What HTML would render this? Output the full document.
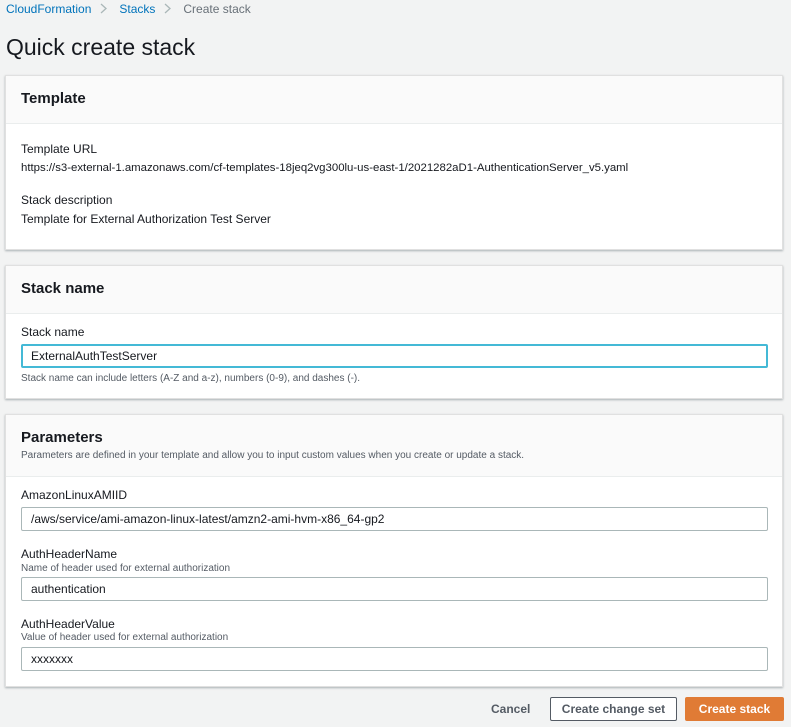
<!DOCTYPE html>
<html><head><style>
body{margin:0;width:791px;height:727px;background:#f2f3f3;font-family:"Liberation Sans",sans-serif;color:#16191f;position:relative;overflow:hidden}
.a{position:absolute;white-space:nowrap}
.p{position:absolute;left:5px;width:778px;background:#fff;box-shadow:0 1px 2px rgba(0,28,36,.3);border:1px solid #e0e0e0;box-sizing:border-box}
.h{position:absolute;left:0;right:0;top:0;background:#fafafa;border-bottom:1px solid #eaeded}
.in{position:absolute;left:21px;width:747px;height:24px;border:1px solid #aab7b8;border-radius:2px;box-sizing:border-box;background:#fff;font-size:12px;padding:4px 9px}
.s{font-size:10px;color:#545b64}
.ht{font-size:15px;font-weight:bold}
</style></head><body>
<div class="a" style="left:6px;top:2px;font-size:12px"><span style="color:#0073bb">CloudFormation</span><svg width="28" height="12" style="vertical-align:-1px"><path d="M10 2l5 4.5-5 4.5" fill="none" stroke="#aab7b8" stroke-width="1.3"/></svg><span style="color:#0073bb">Stacks</span><svg width="28" height="12" style="vertical-align:-1px"><path d="M10 2l5 4.5-5 4.5" fill="none" stroke="#aab7b8" stroke-width="1.3"/></svg><span style="color:#687078">Create stack</span></div>
<div class="a" style="left:6px;top:34px;font-size:23px">Quick create stack</div>

<div class="p" style="top:75px;height:175px"><div class="h" style="height:47px"></div></div>
<div class="a ht" style="left:21px;top:90px">Template</div>
<div class="a" style="left:21px;top:142px;font-size:12px">Template URL</div>
<div class="a" style="left:21px;top:162px;font-size:11.4px">https://s3-external-1.amazonaws.com/cf-templates-18jeq2vg300lu-us-east-1/2021282aD1-AuthenticationServer_v5.yaml</div>
<div class="a" style="left:21px;top:193px;font-size:12px">Stack description</div>
<div class="a" style="left:21px;top:212px;font-size:12px">Template for External Authorization Test Server</div>

<div class="p" style="top:265px;height:134px"><div class="h" style="height:47px"></div></div>
<div class="a ht" style="left:21px;top:280px">Stack name</div>
<div class="a" style="left:21px;top:325px;font-size:12px">Stack name</div>
<div class="in" style="top:344px;border:2px solid #44b9d6;padding:3px 8px">ExternalAuthTestServer</div>
<div class="a s" style="left:21px;top:373px">Stack name can include letters (A-Z and a-z), numbers (0-9), and dashes (-).</div>

<div class="p" style="top:414px;height:273px"><div class="h" style="height:61px"></div></div>
<div class="a ht" style="left:21px;top:429px">Parameters</div>
<div class="a s" style="left:21px;top:450px">Parameters are defined in your template and allow you to input custom values when you create or update a stack.</div>
<div class="a" style="left:21px;top:488px;font-size:12px">AmazonLinuxAMIID</div>
<div class="in" style="top:507px">/aws/service/ami-amazon-linux-latest/amzn2-ami-hvm-x86_64-gp2</div>
<div class="a" style="left:21px;top:547px;font-size:12px">AuthHeaderName</div>
<div class="a s" style="left:21px;top:563px">Name of header used for external authorization</div>
<div class="in" style="top:577px">authentication</div>
<div class="a" style="left:21px;top:617px;font-size:12px">AuthHeaderValue</div>
<div class="a s" style="left:21px;top:632px">Value of header used for external authorization</div>
<div class="in" style="top:647px">xxxxxxx</div>

<div class="a" style="left:491px;top:702px;font-size:12px;font-weight:bold;color:#545b64">Cancel</div>
<div class="a" style="left:550px;top:697px;width:127px;height:24px;border:1px solid #545b64;border-radius:2px;box-sizing:border-box;background:#fff;font-size:12px;font-weight:bold;color:#545b64;text-align:center;line-height:22px">Create change set</div>
<div class="a" style="left:685px;top:697px;width:99px;height:24px;border-radius:2px;background:#e07b35;font-size:12px;font-weight:bold;color:#fff;text-align:center;line-height:24px">Create stack</div>
</body></html>
